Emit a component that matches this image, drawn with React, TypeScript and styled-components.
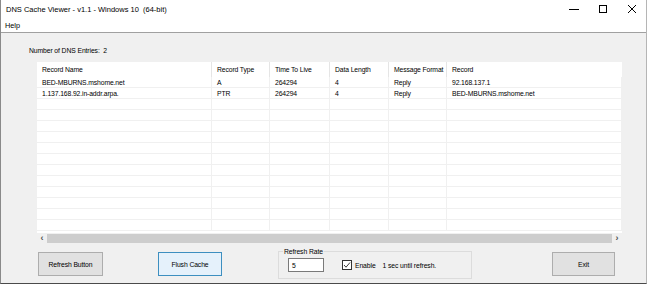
import React from "react";
import styled, { createGlobalStyle } from "styled-components";

const Global = createGlobalStyle`
  html, body {
    margin: 0;
    padding: 0;
    background: #ffffff;
  }
  body {
    font-family: "Liberation Sans", Arial, sans-serif;
    color: #000;
  }
`;

const Window = styled.div`
  width: 645px;
  height: 283px;
  border-left: 1px solid #8a8a8a;
  border-right: 1px solid #b5b5b5;
  border-bottom: 1px solid #4a4a4a;
  display: flex;
  flex-direction: column;
  overflow: hidden;
  background: #f0f0f0;
`;

const TitleBar = styled.div`
  height: 18px;
  background: #ffffff;
  display: flex;
  align-items: center;
  justify-content: space-between;
  padding-left: 5px;
`;

const Title = styled.span`
  font-size: 7.5px;
`;

const Controls = styled.div`
  display: flex;
  height: 100%;
`;

const Ctrl = styled.div`
  width: 29px;
  height: 100%;
  display: flex;
  align-items: center;
  justify-content: center;
`;

const MenuBar = styled.div`
  height: 14px;
  background: #ffffff;
  border-bottom: 1px solid #a0a0a0;
  display: flex;
  align-items: center;
  padding-left: 4px;
  font-size: 7.3px;
`;

const Body = styled.div`
  flex: 1;
  display: flex;
  flex-direction: column;
  padding: 0 0 0 36px;
`;

const EntryCount = styled.div`
  font-size: 6.8px;
  margin: 14px 0 0 -8px;
  height: 15px;
  letter-spacing: -0.1px;
`;

const ListView = styled.div`
  width: 585px;
  height: 181px;
  background: #ffffff;
  display: flex;
  flex-direction: column;
  overflow: hidden;
`;

const Grid = styled.div`
  flex: 1;
  display: grid;
  grid-template-columns: 175px 58px 60px 59px 58px 1fr;
  grid-auto-rows: 11px;
  grid-template-rows: 15px;
  overflow: hidden;
`;

const HeadCell = styled.div<{ $last?: boolean }>`
  font-size: 6.8px;
  letter-spacing: -0.12px;
  display: flex;
  align-items: center;
  padding-left: 5px;
  white-space: nowrap;
  overflow: hidden;
  border-right: ${(p) => (p.$last ? "none" : "1px solid #e5e5e5")};
`;

const Cell = styled.div`
  font-size: 6.8px;
  letter-spacing: -0.12px;
  display: flex;
  align-items: center;
  padding-left: 5px;
  border-right: 1px solid #f0f0f0;
  border-bottom: 1px solid #f0f0f0;
  white-space: nowrap;
`;

const ScrollBar = styled.div`
  height: 10px;
  background: #f0f0f0;
  display: flex;
  align-items: center;
`;

const Arrow = styled.div`
  width: 10px;
  font-size: 9px;
  line-height: 9px;
  color: #505050;
  display: flex;
  justify-content: center;
  font-weight: bold;
`;

const Thumb = styled.div`
  flex: 1;
  height: 9px;
  background: #cdcdcd;
`;

const BottomBar = styled.div`
  display: flex;
  align-items: flex-start;
  margin-top: 9px;
  padding-left: 1px;
`;

const Button = styled.div<{ $focused?: boolean; $w: number }>`
  width: ${(p) => p.$w}px;
  height: 24px;
  box-sizing: border-box;
  background: ${(p) => (p.$focused ? "#e5f1fb" : "#e1e1e1")};
  border: 1px solid ${(p) => (p.$focused ? "#3d8fc0" : "#adadad")};
  font-size: 6.8px;
  letter-spacing: -0.1px;
  display: flex;
  align-items: center;
  justify-content: center;
`;

const GroupBox = styled.fieldset`
  margin: -4px 0 0 56px;
  width: 194px;
  height: 31px;
  box-sizing: border-box;
  border: 1px solid #dcdcdc;
  padding: 0 0 0 9px;
  display: flex;
  align-items: center;
  gap: 18px;
`;

const Legend = styled.legend`
  font-size: 6.8px;
  letter-spacing: -0.1px;
  padding: 0 1px;
  margin-left: -5px;
`;

const TextBox = styled.div`
  width: 36px;
  height: 14px;
  box-sizing: border-box;
  background: #fff;
  border: 1px solid #7a7a7a;
  font-size: 6.8px;
  padding-left: 3px;
  display: flex;
  align-items: center;
  margin-top: -3px;
`;

const CheckRow = styled.div`
  display: flex;
  align-items: center;
  font-size: 6.8px;
  letter-spacing: -0.1px;
  margin-top: -3px;
`;

const CheckBox = styled.div`
  width: 8px;
  height: 8px;
  border: 1px solid #333;
  background: #fff;
  margin-right: 3px;
  display: flex;
`;

const Status = styled.span`
  margin-left: 7px;
`;

const headers = [
  "Record Name",
  "Record Type",
  "Time To Live",
  "Data Length",
  "Message Format",
  "Record",
];

const rows = [
  ["BED-MBURNS.mshome.net", "A", "264294", "4", "Reply", "92.168.137.1"],
  ["1.137.168.92.in-addr.arpa.", "PTR", "264294", "4", "Reply", "BED-MBURNS.mshome.net"],
];

const emptyRows = Array.from({ length: 12 }, () => ["", "", "", "", "", ""]);

export default function App() {
  return (
    <>
      <Global />
      <Window>
        <TitleBar>
          <Title>DNS Cache Viewer - v1.1 - Windows 10&nbsp;&nbsp;(64-bit)</Title>
          <Controls>
            <Ctrl>
              <svg width="10" height="10" viewBox="0 0 10 10">
                <line x1="0" y1="5.5" x2="10" y2="5.5" stroke="#000" strokeWidth="1" />
              </svg>
            </Ctrl>
            <Ctrl>
              <svg width="10" height="10" viewBox="0 0 10 10">
                <rect x="1.5" y="1.5" width="7" height="7" fill="none" stroke="#000" strokeWidth="1" />
              </svg>
            </Ctrl>
            <Ctrl>
              <svg width="10" height="10" viewBox="0 0 10 10">
                <path d="M1 1 L9 9 M9 1 L1 9" stroke="#000" strokeWidth="1" />
              </svg>
            </Ctrl>
          </Controls>
        </TitleBar>
        <MenuBar>Help</MenuBar>
        <Body>
          <EntryCount>Number of DNS Entries:&nbsp;&nbsp;2</EntryCount>
          <ListView>
            <Grid>
              {headers.map((h, i) => (
                <HeadCell key={h} $last={i === headers.length - 1}>
                  {h}
                </HeadCell>
              ))}
              {[...rows, ...emptyRows].map((r, ri) =>
                r.map((c, ci) => <Cell key={`${ri}-${ci}`}>{c}</Cell>)
              )}
            </Grid>
            <ScrollBar>
              <Arrow>‹</Arrow>
              <Thumb />
              <Arrow>›</Arrow>
            </ScrollBar>
          </ListView>
          <BottomBar>
            <Button $w={65}>Refresh Button</Button>
            <Button $w={64} $focused style={{ marginLeft: 55 }}>
              Flush Cache
            </Button>
            <GroupBox>
              <Legend>Refresh Rate</Legend>
              <TextBox>5</TextBox>
              <CheckRow>
                <CheckBox>
                  <svg width="8" height="8" viewBox="0 0 8 8">
                    <path d="M1 4 L3 6.2 L7 1.5" fill="none" stroke="#222" strokeWidth="0.9" />
                  </svg>
                </CheckBox>
                Enable
                <Status>1 sec until refresh.</Status>
              </CheckRow>
            </GroupBox>
            <Button $w={63} style={{ marginLeft: 80 }}>
              Exit
            </Button>
          </BottomBar>
        </Body>
      </Window>
    </>
  );
}
